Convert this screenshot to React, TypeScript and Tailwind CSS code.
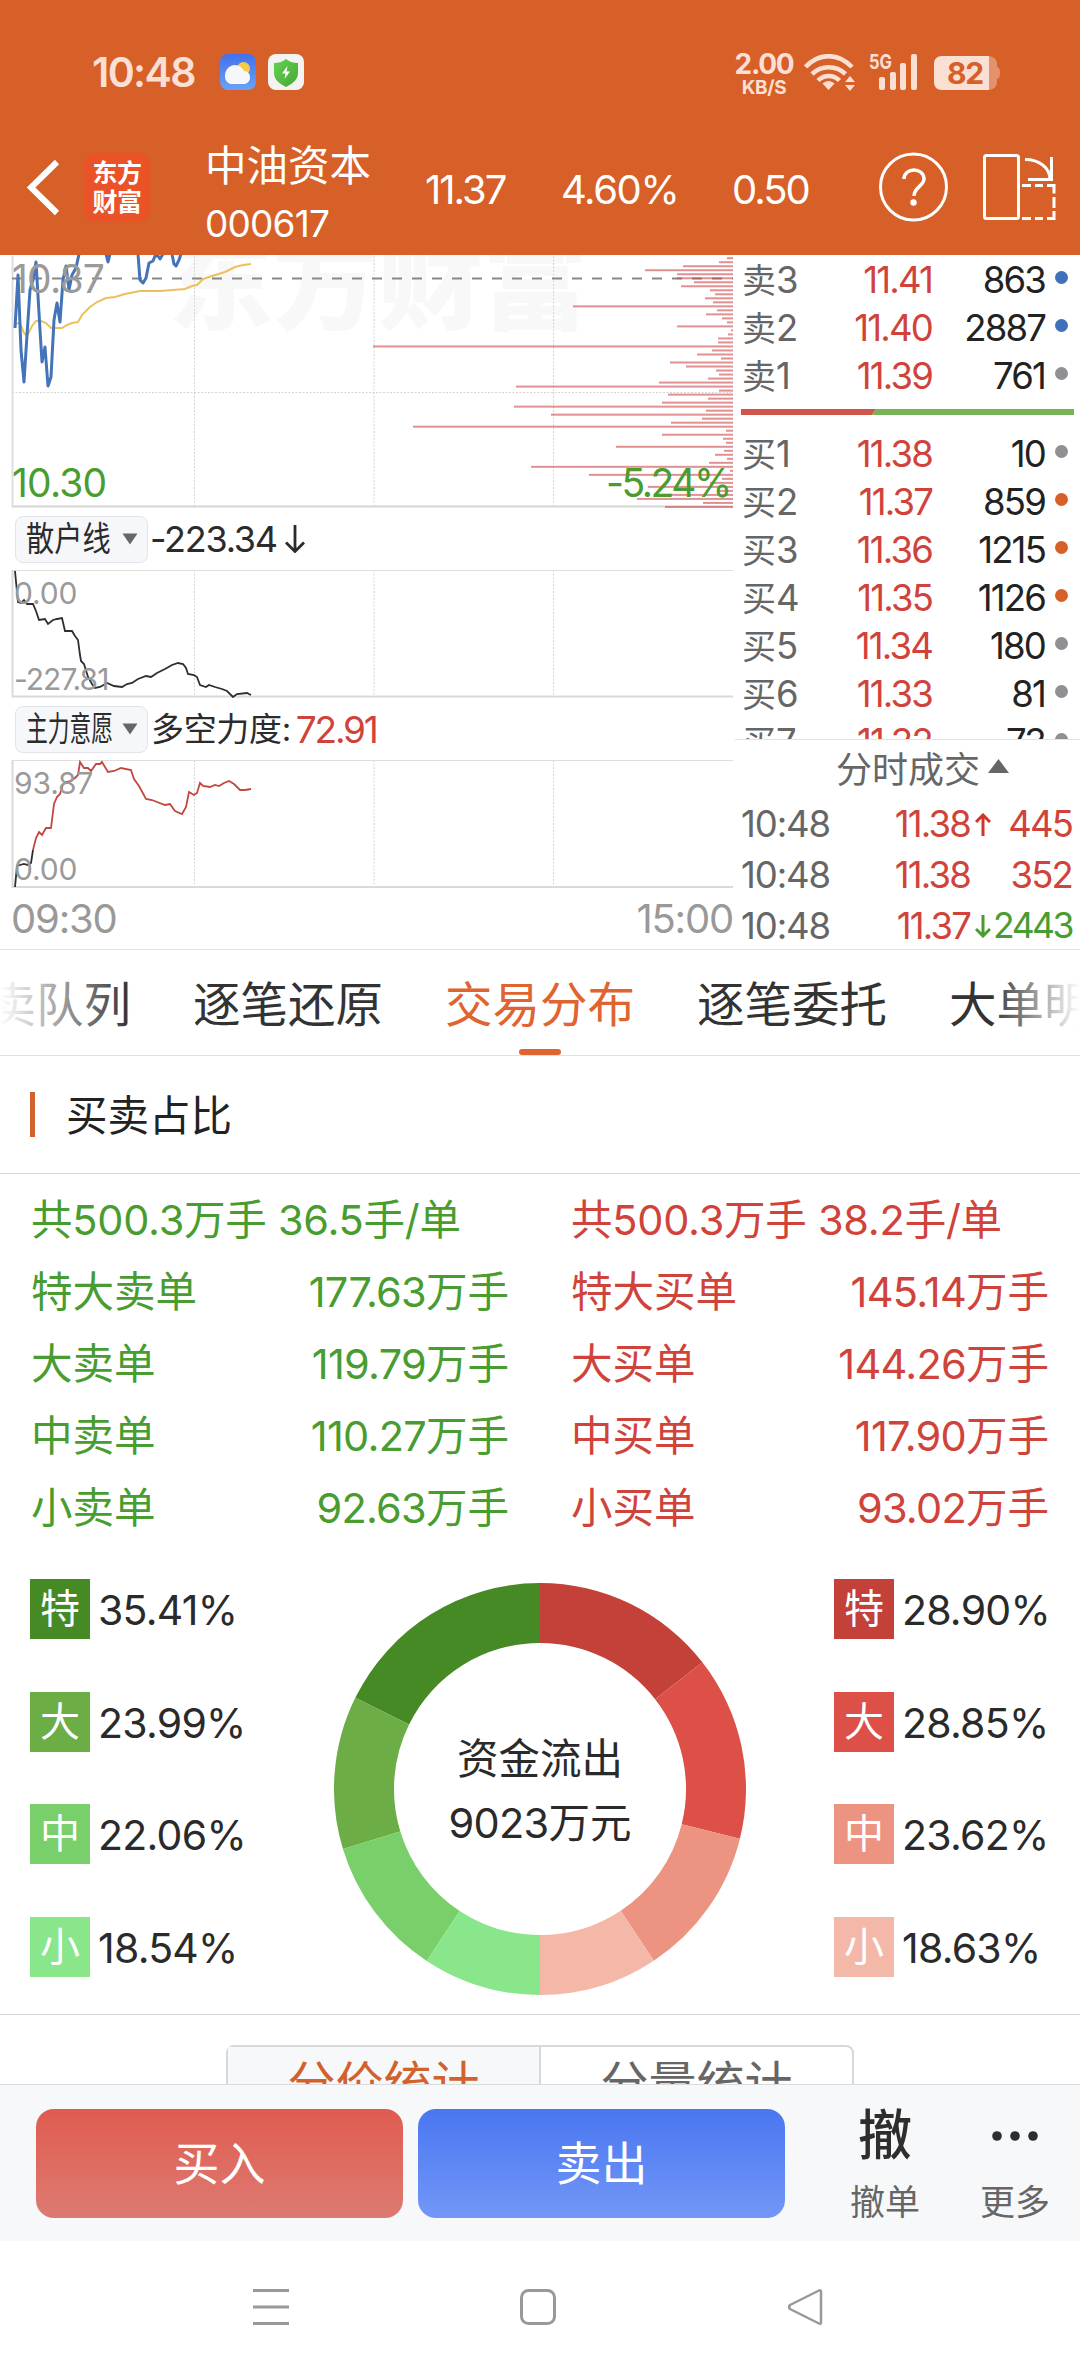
import React from 'react';

type Level = { name: string; price: string; volume: string; dot: string };

const BLUE_DOT = 'bg-[#4070b8]';
const GRAY_DOT = 'bg-[#8f8f94]';
const ORANGE_DOT = 'bg-[#d76027]';

const asks: Level[] = [
  { name: '卖3', price: '11.41', volume: '863', dot: BLUE_DOT },
  { name: '卖2', price: '11.40', volume: '2887', dot: BLUE_DOT },
  { name: '卖1', price: '11.39', volume: '761', dot: GRAY_DOT },
];

const bids: Level[] = [
  { name: '买1', price: '11.38', volume: '10', dot: GRAY_DOT },
  { name: '买2', price: '11.37', volume: '859', dot: ORANGE_DOT },
  { name: '买3', price: '11.36', volume: '1215', dot: ORANGE_DOT },
  { name: '买4', price: '11.35', volume: '1126', dot: ORANGE_DOT },
  { name: '买5', price: '11.34', volume: '180', dot: GRAY_DOT },
  { name: '买6', price: '11.33', volume: '81', dot: GRAY_DOT },
  { name: '买7', price: '11.32', volume: '73', dot: GRAY_DOT },
];

const ticks = [
  { time: '10:48', price: '11.38', dir: 'up', volume: '445' },
  { time: '10:48', price: '11.38', dir: '', volume: '352' },
  { time: '10:48', price: '11.37', dir: 'down', volume: '2443' },
];

const sellRows = [
  ['特大卖单', '177.63'],
  ['大卖单', '119.79'],
  ['中卖单', '110.27'],
  ['小卖单', '92.63'],
];

const buyRows = [
  ['特大买单', '145.14'],
  ['大买单', '144.26'],
  ['中买单', '117.90'],
  ['小买单', '93.02'],
];

const sellShare = [
  { tag: '特', value: 35.41, bg: 'bg-[#468a25]', fill: '#468a25' },
  { tag: '大', value: 23.99, bg: 'bg-[#6cae45]', fill: '#6cae45' },
  { tag: '中', value: 22.06, bg: 'bg-[#79cf6a]', fill: '#79cf6a' },
  { tag: '小', value: 18.54, bg: 'bg-[#8ae68b]', fill: '#8ae68b' },
];

const buyShare = [
  { tag: '特', value: 28.9, bg: 'bg-[#c34139]', fill: '#c34139' },
  { tag: '大', value: 28.85, bg: 'bg-[#dc5047]', fill: '#dc5047' },
  { tag: '中', value: 23.62, bg: 'bg-[#ed9381]', fill: '#ed9381' },
  { tag: '小', value: 18.63, bg: 'bg-[#f4b8a9]', fill: '#f4b8a9' },
];

// volume at price, one bar every 4px from the top
const volumeBars = [
  6, 14, 50, 88, 56, 56, 39, 52, 23, 18, 28, 20, 160, 16, 27, 11, 6, 56, 2, 5, 15, 15, 360, 21, 36, 12, 63, 47,
  17, 14, 25, 74, 217, 14, 65, 25, 71, 219, 27, 182, 31, 62, 320, 7, 71, 10, 7, 117, 9, 18, 6, 24, 202, 3, 144,
  11, 23, 85, 14, 71, 96, 30, 68,
];

const Num: React.FC<{ children: React.ReactNode }> = ({ children }) => (
  <span className="tracking-[-0.05em]">{children}</span>
);

const WideNum: React.FC<{ children: React.ReactNode }> = ({ children }) => (
  <span className="tracking-[-0.018em]">{children}</span>
);

const StatusBar: React.FC = () => (
  <div className="flex h-36 items-start pl-[92px] pr-[80px] pt-[54px] text-[#fadfd3]">
    <span className="mt-[-2px] w-[128px] text-[41px] font-semibold leading-[40px] tracking-[-0.04em]">10:48</span>
    <svg width="36" height="36" viewBox="0 0 36 36">
      <defs>
        <linearGradient id="sky" x1="0" y1="0" x2="0" y2="1">
          <stop offset="0" stopColor="#4270ee" />
          <stop offset="1" stopColor="#6aa2f5" />
        </linearGradient>
        <linearGradient id="shield" x1="0" y1="0" x2="1" y2="1">
          <stop offset="0" stopColor="#67d04f" />
          <stop offset="1" stopColor="#44a838" />
        </linearGradient>
      </defs>
      <rect width="36" height="36" rx="8" fill="url(#sky)" />
      <circle cx="23.500" cy="14.500" r="6.500" fill="#f8ca45" />
      <path d="M10 30a8.500 8.500 0 0 1-5-8c0-6 4-11 10-11 4 0 7 2 9 6 4 0 6 3 6 6.500 0 4-3 6.500-6 6.500z" fill="#f6f7fb" />
    </svg>
    <svg width="36" height="36" viewBox="0 0 36 36" className="ml-3">
      <rect width="36" height="36" rx="8" fill="#f3f4f1" />
      <path d="M18 5c4 3 8 4 12 4v10c0 7-6 11-12 14C12 30 6 26 6 19V9c4 0 8-1 12-4z" fill="url(#shield)" />
      <path d="M19.500 12l-5.500 7.500h3.500l-1 5.500 5.500-7.500h-3.500z" fill="#fff" />
    </svg>
    <div className="ml-auto flex items-start">
      <div className="mr-[10px] flex w-[60px] flex-col items-center whitespace-nowrap font-bold">
        <span className="mt-[-4px] text-[28px] leading-[28px] tracking-[-0.045em]">2.00</span>
        <span className="text-[19px] leading-[19px] tracking-[-0.02em]">KB/S</span>
      </div>
      <svg width="52" height="37" viewBox="0 0 52 37" fill="none" stroke="#fadfd3" strokeWidth="4.500">
        <path d="M1.500 13C15-1.500 34-1.500 48 13" />
        <path d="M8 20c9.500-9 24-9 33.500 0" />
        <path d="M14 26.500c6-6 15.500-6 21.500 0" />
        <path d="M18.500 29.500c4-3.500 8-3.500 12 0l-6 6.500z" fill="#fadfd3" stroke="none" />
        <path d="M46 22l5 6H41zM46 37l5-6H41z" fill="#fadfd3" stroke="none" />
      </svg>
      <svg width="50" height="37" viewBox="0 0 50 37" fill="#fadfd3" className="ml-[13px] overflow-visible">
        <text x="0" y="15" fontSize="20" fontWeight="700" textLength="23" lengthAdjust="spacingAndGlyphs">5G</text>
        <rect x="10" y="23" width="6" height="13" rx="2" />
        <rect x="21" y="18" width="6" height="18" rx="2" />
        <rect x="31" y="9" width="6" height="27" rx="2" />
        <rect x="42" y="0" width="6" height="36" rx="2" />
      </svg>
      <div className="relative ml-[15px] mt-[2px] h-[34px] w-[66px]">
        <svg width="66" height="34" viewBox="0 0 66 34">
          <path d="M54 0c6 0 9 4 9 8v3c2 0 3 2 3 6s-1 6-3 6v3c0 4-3 8-9 8z" fill="#e3926d" />
          <path d="M8 0h47v34H8c-5 0-8-3-8-8V8c0-5 3-8 8-8z" fill="#fadfd3" />
        </svg>
        <span className="absolute inset-y-0 left-[13px] text-[30px] font-bold leading-[35px] tracking-[-0.04em] text-[#d75f28]">82</span>
      </div>
    </div>
  </div>
);

const TitleBar: React.FC = () => (
  <div className="flex h-[111px] items-start text-white">
    <svg width="84" height="80" viewBox="0 144 84 80" fill="none" stroke="#fff" strokeWidth="6">
      <path d="M57 162L31 187.500L57 213" />
    </svg>
    <div className="mt-[9px] flex h-[69px] w-[66px] flex-col items-center justify-center rounded-xl bg-[#ea5228] text-[25px] font-bold leading-[29px] tracking-[-0.02em]">
      <span>东方</span>
      <span>财富</span>
    </div>
    <div className="ml-[55px] w-[220px]">
      <div className="mt-[-5px] text-[41.500px] leading-[54px]">中油资本</div>
      <div className="mt-[8px] text-[37px] leading-[46px] tracking-[-0.022em]">000617</div>
    </div>
    <div className="mt-[23px] flex text-[40px] leading-[45px]">
      <span className="w-[136px]"><Num>11.37</Num></span>
      <span className="w-[171px] tracking-[-0.035em]">4.60%</span>
      <span className="w-[147px]"><Num>0.50</Num></span>
    </div>
    <svg width="70" height="70" viewBox="0 0 70 70" className="mt-[8px]" fill="none" stroke="#fff" strokeWidth="3">
      <circle cx="34.500" cy="35" r="33" />
      <path d="M25 27c0-12 20-12 20 0 0 7-10 8-10 17" strokeWidth="3.500" />
      <circle cx="34.500" cy="50.500" r="3.200" fill="#fff" stroke="none" />
    </svg>
    <svg width="76" height="70" viewBox="978 152 76 70" className="ml-[30px] mt-[8px] overflow-visible" fill="none" stroke="#fff" strokeWidth="3">
      <rect x="983.500" y="155.500" width="34" height="63" rx="2" />
      <path d="M1024 159.500c14 0 25 8 25 20" />
      <path d="M1027 179.500h23.500V157" />
      <path d="M1021 185.500h9M1034 185.500h8M1046 185.500h7v8M1053 197v11M1053 211v7.500h-7M1042 218.500h-8M1030 218.500h-9" />
    </svg>
  </div>
);

const Grid: React.FC<{ top: number; bottom: number }> = ({ top, bottom }) => (
  <g stroke="#d4d4d4" strokeDasharray="2 1.500">
    <path d={`M194.500 ${top}V${bottom}`} />
    <path d={`M374 ${top}V${bottom}`} />
    <path d={`M553.500 ${top}V${bottom}`} />
  </g>
);

const PriceChart: React.FC = () => (
  <svg width="735" height="253" viewBox="0 255 735 253" className="block tracking-[-0.05em]">
    <text x="168" y="321" fontSize="105" fontWeight="900" fill="#f8f8f8" letterSpacing="0">东方财富</text>
    <Grid top={256} bottom={506} />
    <path d="M12 392.500H733" stroke="#d4d4d4" strokeDasharray="2 1.500" />
    <path d="M12 506.500H733" stroke="#d6d6d6" strokeWidth="2" />
    <path d="M12.500 256V507" stroke="#dedede" strokeWidth="2" />
    <path d="M12 278.500H733" stroke="#878787" strokeWidth="2" strokeDasharray="10 10" />
    {volumeBars.map((w, i) => (
      <rect key={i} x={733 - w} y={257.2 + i * 4.012} width={w} height="2" fill="#cf4d4d" fillOpacity="0.62" />
    ))}
    <polyline
      fill="none" stroke="#ebc15c" strokeWidth="2"
      points="15,324 20,323 24,333 27,336 32,326 36,321 41,321 46,323 51,328 56,328 62,328 67,325 72,323 78,322 82,315 90,307 97,302 106,298 115,297 125,294 140,291 160,291 185,289 192,286 197,285 203,279 212,276 225,272 235,267 243,265 251,264"
    />
    <g fill="none" stroke="#4473b9" strokeWidth="3" strokeLinejoin="round">
      <polyline points="15,328 18,275 21,350 24,382 27,335 30,290 33,280 36,262 40,330 42,362 45,347 48,386 51,377 54,320 57,303 60,322 63,280 66,266 69,290 72,275 76,268 79,254" />
      <polyline points="106,254 108,262 110,254" />
      <polyline points="138,254 140,280 143,283 146,278 149,263 153,261 155,256 158,256 160,259 163,254" />
      <polyline points="172,254 174,264 176,266 179,260 181,254" />
    </g>
    <text x="12" y="293" fontSize="39" fill="#9a9a9a">10.87</text>
    <text x="12" y="496.500" fontSize="39" fill="#489c30">10.30</text>
    <text x="730" y="496.500" fontSize="39" fill="#489c30" textAnchor="end" letterSpacing="-2.400">-5.24%</text>
  </svg>
);

const RetailChart: React.FC = () => (
  <svg width="735" height="128" viewBox="0 570 735 128" className="block tracking-[-0.01em]">
    <Grid top={570} bottom={696} />
    <path d="M12 570.500H733" stroke="#dedede" />
    <path d="M12.500 570V696.500H733" stroke="#dadada" strokeWidth="2" fill="none" />
    <polyline
      fill="none" stroke="#2e2e2e" strokeWidth="1.800"
      points="15,571 17,592 18,602 21,603 24,600 27,604 33,604 36,611 39,620 45,619 48,624 53,620 57,619 62,618 65,631 72,631 75,636 78,640 80,655 81,661 84,664 88,677 92,684 95,688 100,687 107,683 114,686 122,687 127,684 132,683 138,679 146,676 151,677 157,673 165,669 172,665 178,663 183,664 186,668 188,674 194,675 197,677 200,685 206,687 209,685 215,687 222,689 227,691 233,697 237,694 247,693 251,695"
    />
    <text x="14" y="603.500" fontSize="30" fill="#9a9a9a">0.00</text>
    <text x="14" y="689.500" fontSize="30" fill="#9a9a9a" letterSpacing="-1">-227.81</text>
  </svg>
);

const MainForceChart: React.FC = () => (
  <svg width="735" height="128" viewBox="0 760 735 128" className="block tracking-[-0.01em]">
    <Grid top={760} bottom={886} />
    <path d="M12 760.500H733" stroke="#dedede" />
    <path d="M12.500 760V887H733" stroke="#dadada" strokeWidth="2" fill="none" />
    <polyline fill="none" stroke="#2e2e2e" strokeWidth="1.800" points="15,887 17,866 20,865 24,864 28,865 31,863 33,850" />
    <polyline
      fill="none" stroke="#c4473f" strokeWidth="1.800"
      points="33,850 36,838 39,832 42,835 46,828 51,828 54,804 57,797 60,794 63,784 66,782 70,781 75,778 78,775 80,762 84,768 88,768 91,771 96,764 100,764 102,762 108,772 114,771 121,768 131,770 134,779 139,786 146,799 152,800 165,805 170,804 175,811 182,814 186,807 189,792 194,795 197,793 200,783 203,786 210,787 215,785 219,786 224,783 229,781 234,784 240,790 245,790 251,789"
    />
    <text x="14" y="794" fontSize="30" fill="#9a9a9a">93.87</text>
    <text x="14" y="880" fontSize="30" fill="#9a9a9a">0.00</text>
  </svg>
);

const IndicatorButton: React.FC<{ children: React.ReactNode }> = ({ children }) => (
  <button className="flex h-[47px] w-[133px] shrink-0 items-center rounded-lg border border-[#e2e4e9] bg-[#f6f7fa] pl-[10px] text-[34px] leading-none">
    <span className="w-[96px] text-left">{children}</span>
    <svg width="16" height="12" viewBox="0 0 16 12"><path d="M0.500 0.500h15L8 11.500z" fill="#666" /></svg>
  </button>
);

const Charts: React.FC = () => (
  <div className="w-[735px] text-[#2b2b2b]">
    <PriceChart />
    <div className="flex h-[62px] items-center pl-[15px] text-[36px] leading-none">
      <IndicatorButton><span className="inline-block origin-left scale-x-[0.83] whitespace-nowrap">散户线</span></IndicatorButton>
      <span className="ml-[2px] tracking-[-0.035em]">-223.34</span>
      <svg width="20" height="28" viewBox="0 0 20 28" fill="none" stroke="#2b2b2b" strokeWidth="2.800" className="ml-[8px]">
        <path d="M10 0v26M1 17.500l9 9 9-9" />
      </svg>
    </div>
    <RetailChart />
    <div className="flex h-[62px] items-center pl-[15px] leading-none">
      <IndicatorButton><span className="inline-block origin-left scale-x-[0.64] whitespace-nowrap">主力意愿</span></IndicatorButton>
      <span className="ml-[3px] text-[33px] tracking-[-0.01em]">多空力度:</span>
      <span className="ml-[5px] text-[37px] tracking-[-0.06em] text-[#d0433a]">72.91</span>
    </div>
    <MainForceChart />
    <div className="flex h-[61px] items-center justify-between pl-[11px] pr-[2px] text-[40px] leading-none tracking-[-0.03em] text-[#999]">
      <span>09:30</span>
      <span>15:00</span>
    </div>
  </div>
);

const LevelRow: React.FC<{ level: Level }> = ({ level }) => (
  <div className="flex h-12 shrink-0 items-center pl-[7px] text-[36.500px] leading-[48px]">
    <span className="w-[70px] text-[#666]"><span className="text-[34px]">{level.name[0]}</span>{level.name[1]}</span>
    <span className="w-[120px] text-right text-[#d0433a]"><Num>{level.price}</Num></span>
    <span className="w-[113px] text-right text-[#222]"><Num>{level.volume}</Num></span>
    <span className={`mb-[5px] ml-[10px] size-[13px] rounded-full ${level.dot}`} />
  </div>
);

const OrderBook: React.FC = () => (
  <div className="w-[345px]">
    <div className="flex h-[485px] flex-col overflow-hidden border-b border-[#e2e2e2] pt-px">
      {asks.map((l) => <LevelRow key={l.name} level={l} />)}
      <svg width="333" height="6" viewBox="0 0 333 6" className="mb-[15px] ml-[6px] mt-[9px] shrink-0">
        <path d="M0 0h135l-4 6H0z" fill="#d0544c" />
        <path d="M135 0h198v6H131z" fill="#76b457" />
      </svg>
      {bids.map((l) => <LevelRow key={l.name} level={l} />)}
    </div>
    <div className="flex h-[58px] items-center pl-[101px] pt-[2px] text-[36px] leading-none text-[#666]">
      <span>分时成交</span>
      <svg width="21" height="14" viewBox="0 0 21 14" className="mb-[8px] ml-[8px]"><path d="M10.500 0L21 14H0z" fill="#666" /></svg>
    </div>
    {ticks.map((t, i) => (
      <div key={i} className="flex h-[51px] items-center pl-[6px] pt-px text-[36.500px] leading-none">
        <span className="w-[100px] tracking-[-0.03em] text-[#666]">{t.time}</span>
        <span className="w-[129px] text-right text-[#d0433a]"><Num>{t.price}</Num></span>
        <span className="flex w-[21px] justify-end">
          {t.dir === 'up' && (
            <svg width="16" height="23" viewBox="0 0 16 23" fill="none" stroke="#d0342b" strokeWidth="3"><path d="M8 23V2M1 9l7-7 7 7" /></svg>
          )}
          {t.dir === 'down' && (
            <svg width="16" height="23" viewBox="0 0 16 23" fill="none" stroke="#489c30" strokeWidth="3"><path d="M8 0v21M1 14l7 7 7-7" /></svg>
          )}
        </span>
        {t.dir === 'down'
          ? <span className="w-[81px] text-right text-[35.500px] tracking-[-0.07em] text-[#489c30]">{t.volume}</span>
          : <span className="w-[81px] text-right text-[#d0433a]"><Num>{t.volume}</Num></span>}
      </div>
    ))}
  </div>
);

const Tabs: React.FC = () => (
  <div className="relative h-[107px] overflow-hidden border-y border-[#e2e2e2]">
    <div className="ml-[-59px] flex w-[1300px] gap-[62px] text-[47.500px] leading-[110px] text-[#333]">
      <span className="w-[190px] shrink-0">买卖队列</span>
      <span className="w-[190px] shrink-0">逐笔还原</span>
      <span className="relative w-[190px] shrink-0 text-[#df6430]">
        交易分布
        <i className="absolute bottom-[5px] left-[74px] h-[6px] w-[42px] rounded-full bg-[#df6430]" />
      </span>
      <span className="w-[190px] shrink-0">逐笔委托</span>
      <span className="w-[190px] shrink-0">大单明细</span>
    </div>
    <div className="absolute inset-y-0 left-0 w-[130px] bg-linear-to-r from-white to-white/0" />
    <div className="absolute inset-y-0 right-0 w-[90px] bg-linear-to-l from-white to-white/0" />
  </div>
);

const Orders: React.FC<{ total: string; avg: string; rows: string[][] }> = ({ total, avg, rows }) => (
  <div className="w-[478px] text-[41.500px] leading-[72px]">
    <div className="whitespace-pre tracking-[-0.006em]">共{total}万手 {avg}手/单</div>
    {rows.map(([name, value]) => (
      <div key={name} className="flex justify-between">
        <span>{name}</span>
        <span><WideNum>{value}</WideNum>万手</span>
      </div>
    ))}
  </div>
);

const Shares: React.FC<{ items: typeof sellShare }> = ({ items }) => (
  <div className="flex w-[216px] flex-col gap-[52.700px]">
    {items.map((s) => (
      <div key={s.tag} className="flex h-[60px] items-center text-[40px] leading-none text-[#2a2a2a]">
        <span className={`flex size-[60px] items-center justify-center text-white ${s.bg}`}>{s.tag}</span>
        <span className="ml-[8px] pt-[3px] text-[41px]"><WideNum>{s.value.toFixed(2)}%</WideNum></span>
      </div>
    ))}
  </div>
);

const point = (deg: number, r: number) => {
  const a = (deg * Math.PI) / 180;
  return `${206 + r * Math.sin(a)} ${206 - r * Math.cos(a)}`;
};

const arcs = (items: typeof sellShare, dir: 1 | -1) => {
  let angle = 0;
  const sweep = dir === 1 ? 1 : 0;
  return items.map((s) => {
    const from = angle * dir;
    angle += s.value * 1.8;
    const to = angle * dir;
    return (
      <path
        key={s.fill}
        fill={s.fill}
        d={`M${point(from, 206)}A206 206 0 0 ${sweep} ${point(to, 206)}L${point(to, 146)}A146 146 0 0 ${1 - sweep} ${point(from, 146)}Z`}
      />
    );
  });
};

const Donut: React.FC = () => (
  <div className="relative mt-[4px] size-[412px]">
    <svg width="412" height="412" viewBox="0 0 412 412">
      {arcs(buyShare, 1)}
      {arcs(sellShare, -1)}
    </svg>
    <div className="absolute inset-0 flex flex-col items-center justify-center pt-[4px] text-[41.500px] leading-[64px] text-[#2a2a2a]">
      <span>资金流出</span>
      <span><WideNum>9023</WideNum>万元</span>
    </div>
  </div>
);

const BottomBar: React.FC = () => (
  <div className="flex h-[157px] shrink-0 border-t border-[#d9dbdf] bg-[#f6f8fa] pl-9 pt-6">
    <button className="h-[109px] w-[367px] rounded-[18px] bg-linear-to-b from-[#e05b4f] to-[#dd7a72] text-[46px] text-white">买入</button>
    <button className="ml-[15px] h-[109px] w-[367px] rounded-[18px] bg-linear-to-b from-[#4a76f0] to-[#7397f8] text-[46px] text-white">卖出</button>
    <div className="ml-[50px] flex w-[100px] flex-col items-center">
      <span className="text-[54px] font-medium leading-[54px] text-[#2e2e2e]">撤</span>
      <span className="mt-[17px] text-[35px] leading-[44px] text-[#666]">撤单</span>
    </div>
    <div className="ml-[30px] flex w-[100px] flex-col items-center">
      <svg width="48" height="54" viewBox="0 0 48 54" fill="#2e2e2e">
        <circle cx="6" cy="27" r="4.800" />
        <circle cx="24" cy="27" r="4.800" />
        <circle cx="42" cy="27" r="4.800" />
      </svg>
      <span className="mt-[17px] text-[35px] leading-[44px] text-[#666]">更多</span>
    </div>
  </div>
);

const SystemNav: React.FC = () => (
  <div className="flex h-[132px] shrink-0 items-center justify-between bg-white pl-[252px] pr-[256px]">
    <svg width="38" height="38" viewBox="0 0 38 38" stroke="#999" strokeWidth="3"><path d="M1 2.500h36M1 19h36M1 35.500h36" /></svg>
    <svg width="38" height="38" viewBox="0 0 38 38" fill="none" stroke="#999" strokeWidth="3"><rect x="2.500" y="2.500" width="33" height="33" rx="7" /></svg>
    <svg width="38" height="38" viewBox="0 0 38 38" fill="none" stroke="#999" strokeWidth="2.500" strokeLinejoin="round">
      <path d="M33 2.500q2-1 2 1.500v30q0 2.500-2 1.500L4 21q-2-2 0-4z" />
    </svg>
  </div>
);

export default function App() {
  return (
    <div className="flex h-[2373px] w-[1080px] flex-col overflow-hidden bg-white font-['Inter','Noto_Sans_CJK_SC',sans-serif] text-[#222]">
      <header className="h-[255px] shrink-0 bg-[#d75f28]">
        <StatusBar />
        <TitleBar />
      </header>
      <section className="flex h-[694px] shrink-0">
        <Charts />
        <OrderBook />
      </section>
      <Tabs />
      <h2 className="flex h-[118px] shrink-0 items-center border-b border-[#d6d6d6] pl-[30px] text-[41.500px] leading-none">
        <i className="mr-[31px] h-[45px] w-[5px] bg-[#d2622d]" />
        <span className="pt-[4px]">买卖占比</span>
      </h2>
      <section className="flex h-[405px] shrink-0 justify-between px-[31px] pt-[10px]">
        <div className="text-[#489c30]"><Orders total="500.3" avg="36.5" rows={sellRows} /></div>
        <div className="text-[#d0433a]"><Orders total="500.3" avg="38.2" rows={buyRows} /></div>
      </section>
      <section className="flex h-[436px] shrink-0 justify-between border-b border-[#d6d8db] pl-[30px] pr-[30px]">
        <Shares items={sellShare} />
        <Donut />
        <Shares items={buyShare} />
      </section>
      <div className="flex min-h-0 flex-1 items-start justify-center overflow-hidden pt-[30px] text-[48px] leading-[74px]">
        <div className="flex h-20 w-[628px] rounded-lg border-2 border-[#d6d8dc] text-center">
          <span className="w-[313px] border-r-2 border-[#d6d8dc] bg-[#f6f8fa] text-[#d2622d]">分价统计</span>
          <span className="flex-1 text-[#666]">分量统计</span>
        </div>
      </div>
      <BottomBar />
      <SystemNav />
    </div>
  );
}
